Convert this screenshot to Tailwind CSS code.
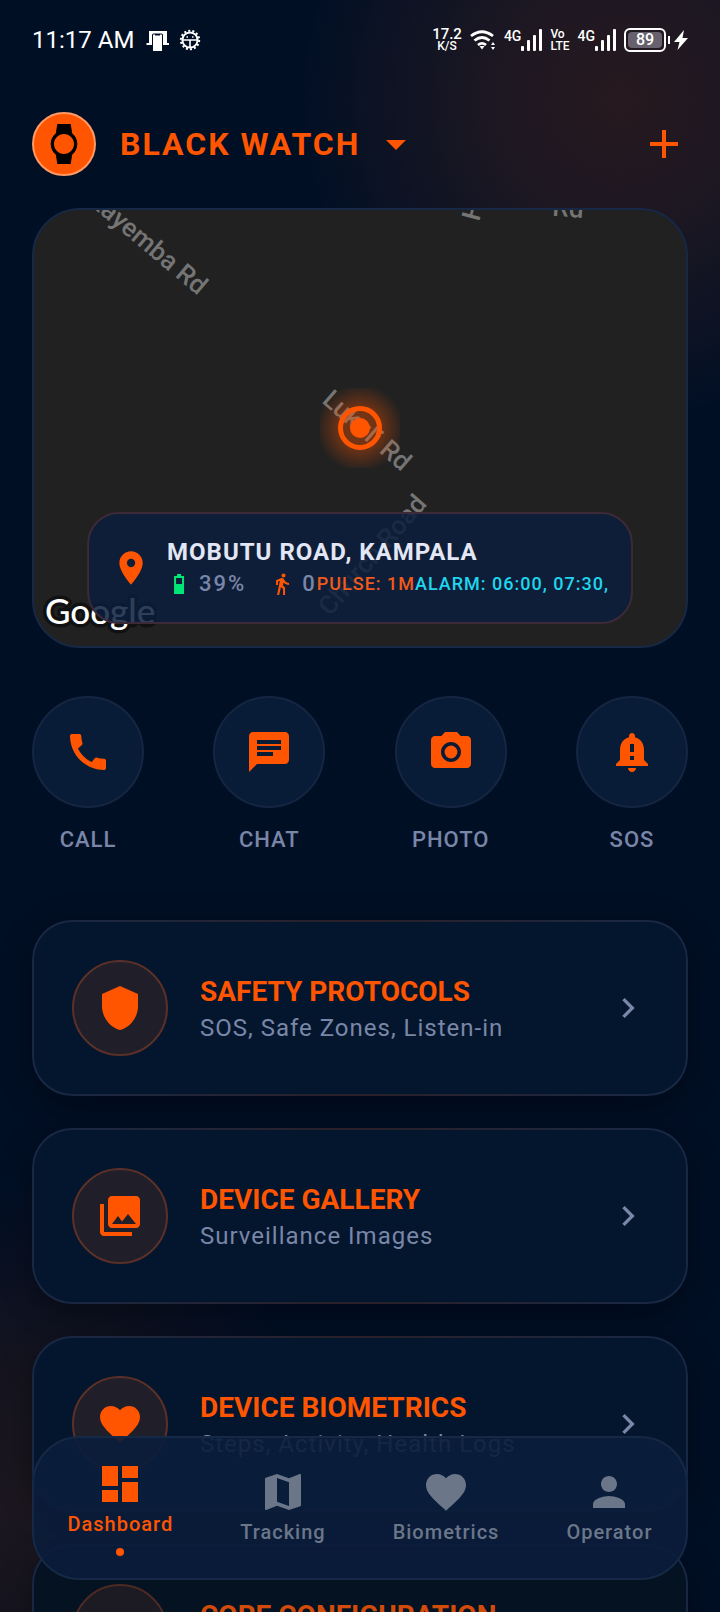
<!DOCTYPE html>
<html lang="en">

<head>
    <meta charset="UTF-8">
    <meta name="viewport" content="width=device-width, initial-scale=1.0">
    <title>Black Watch</title>
    <script src="https://cdn.jsdelivr.net/npm/@tailwindcss/browser@4"></script>
</head>

<body class="bg-[#010f25] font-['Roboto',sans-serif] text-[#7a86a8]">
    <div class="relative h-screen overflow-hidden bg-[radial-gradient(circle_at_620px_100px,#27191f_0px,#1c1722_130px,#0a1224_260px,transparent_320px),radial-gradient(circle_at_20px_1500px,#1c171f_0px,#15141f_130px,#081023_250px,transparent_320px)]">

        <!-- Status bar -->
        <div class="flex h-20 items-center justify-between px-8 text-white">
            <div class="flex items-center gap-3">
                <span class="text-2xl leading-6">11:17 AM</span>
                <div class="flex items-center gap-2">
                    <svg class="size-6" viewBox="0 0 24 24" fill="currentColor" aria-hidden="true">
                        <path d="M3 3h18v12h2v2h-6V7q0-1.500-1.500-1.500h-8Q6 5.500 6 7v10H.5v-2H3z" />
                        <path d="M7 7q0-.5.5-.5h1.500v1h5v-1h1.500q.5 0 .5.5v16H7z" />
                    </svg>
                    <svg class="size-6" viewBox="0 0 24 24" fill="none" stroke="currentColor" aria-hidden="true">
                        <circle cx="12" cy="12" r="7.600" stroke-width="2" />
                        <circle cx="12" cy="12" r="9.200" stroke-width="2" stroke-dasharray="2 2.130" />
                        <path d="M4 12h16M12 12v8" stroke-width="1.600" />
                        <path d="M8.500 9h1.500M14 9h1.500" stroke-width="1.500" />
                    </svg>
                </div>
            </div>
            <div class="flex items-center gap-2 font-medium">
                <div class="text-center">
                    <div class="text-[15px] leading-3">17.2</div>
                    <div class="text-xs leading-3">K/S</div>
                </div>
                <svg class="h-6 w-[26px]" viewBox="0 0 26 24" fill="none" stroke="currentColor" aria-hidden="true">
                    <path d="M1 8q11-8.500 22 0M4.500 12.500q7.500-6 15 0M8 17q4-3.300 8 0" stroke-width="2.800" />
                    <path d="M9.500 18h5L12 21.500z" fill="currentColor" stroke="none" />
                    <path d="M21 17l2-3 2 3zM21 19l2 3 2-3z" fill="currentColor" stroke="none" />
                </svg>
                <div class="flex items-center">
                    <span class="self-start text-sm leading-4">4G</span>
                    <svg class="h-6 w-[21px]" viewBox="0 0 21 24" fill="currentColor" aria-hidden="true">
                        <rect x="0" y="18" width="3" height="5" rx="1" /><rect x="6" y="12" width="3" height="11" rx="1" /><rect x="12" y="7" width="3" height="16" rx="1" /><rect x="18" y="1" width="3" height="22" rx="1" />
                    </svg>
                </div>
                <div class="text-xs leading-3">
                    <div>Vo</div>
                    <div>LTE</div>
                </div>
                <div class="flex items-center">
                    <span class="self-start text-sm leading-4">4G</span>
                    <svg class="h-6 w-[21px]" viewBox="0 0 21 24" fill="currentColor" aria-hidden="true">
                        <rect x="0" y="18" width="3" height="5" rx="1" /><rect x="6" y="12" width="3" height="11" rx="1" /><rect x="12" y="7" width="3" height="16" rx="1" /><rect x="18" y="1" width="3" height="22" rx="1" />
                    </svg>
                </div>
                <div class="flex items-center">
                    <div class="h-6 w-[42px] rounded-md border-2 border-white p-[2px]">
                        <div class="flex h-4 items-center justify-center rounded-sm bg-[#66616c] text-base leading-4">89</div>
                    </div>
                    <div class="ml-[2px] h-2 w-[2px] bg-white"></div>
                    <svg class="ml-1 h-5 w-[14px]" viewBox="0 0 14 20" fill="currentColor" aria-hidden="true">
                        <path d="M10 0L0 12h5.500L3.500 20 14 8H8.500z" />
                    </svg>
                </div>
            </div>
        </div>

        <main class="px-8">
            <!-- Device selector -->
            <header class="flex h-32 items-center">
                <div class="flex size-16 items-center justify-center rounded-full border-2 border-[#ff9a66] bg-[#ff5500]">
                    <svg class="size-12 text-black" viewBox="0 0 24 24" fill="currentColor" aria-hidden="true">
                        <path d="M20 12c0-2.540-1.190-4.810-3.040-6.270L16 0H8l-.95 5.730C5.190 7.190 4 9.450 4 12s1.190 4.810 3.050 6.270L8 24h8l.96-5.730C18.810 16.810 20 14.540 20 12zM6 12c0-3.310 2.690-6 6-6s6 2.690 6 6-2.690 6-6 6-6-2.690-6-6z" transform="translate(2 2) scale(.8333)" />
                    </svg>
                </div>
                <button class="ml-6 flex items-center gap-3 text-[#ff5500]">
                    <span class="text-[32px] font-bold leading-10 tracking-[2px]">BLACK WATCH</span>
                    <svg class="size-12" viewBox="0 0 24 24" fill="currentColor" aria-hidden="true"><path d="M7 10l5 5 5-5z" /></svg>
                </button>
                <button class="ml-auto text-[#ff5500]" aria-label="Add device">
                    <svg class="size-12" viewBox="0 0 24 24" fill="currentColor" aria-hidden="true"><path d="M19 13h-6v6h-2v-6H5v-2h6V5h2v6h6v2z" /></svg>
                </button>
            </header>

            <!-- Map -->
            <section class="relative h-[440px] overflow-hidden rounded-[48px] border-2 border-[#172846] bg-[#212121]">
                <svg class="absolute left-1/2 top-0 h-[436px] w-[652px] -translate-x-1/2" viewBox="0 0 652 436" aria-hidden="true">
                    <g fill="#757575" font-size="26" font-weight="500">
                        <text transform="translate(164 86) rotate(40)" text-anchor="end">Kayemba Rd</text>
                        <text transform="translate(287 192) rotate(41)">Lukuli Rd</text>
                        <text transform="translate(445 12) rotate(-75)">Hill Rd</text>
                        <text transform="translate(549 8) rotate(4)" text-anchor="end">Rd</text>
                        <text transform="translate(296 407) rotate(-49)">Church Road</text>
                    </g>
                    <text x="11" y="414" font-family="Lato" font-size="35" font-weight="500" fill="#fff" stroke="#111" stroke-width="7" stroke-linejoin="round" paint-order="stroke">Google</text>
                </svg>
                <div class="absolute left-1/2 top-1/2 flex size-20 -translate-x-1/2 -translate-y-1/2 items-center justify-center bg-[radial-gradient(circle,#ff550066_0px,#ff550059_20px,transparent_44px)]">
                    <div class="flex size-11 items-center justify-center rounded-full border-[5px] border-[#ff5500]">
                        <div class="size-5 rounded-full bg-[#ff5500]"></div>
                    </div>
                </div>

                <!-- Location card -->
                <div class="absolute bottom-[22px] left-1/2 flex h-28 -translate-x-1/2 items-center gap-4 whitespace-nowrap rounded-[32px] border-2 border-[#3c2a36] bg-[#0b1d3c]/85 px-[22px]">
                    <svg class="size-10 text-[#ff5500]" viewBox="0 0 24 24" fill="currentColor" aria-hidden="true"><path d="M12 2C8.130 2 5 5.130 5 9c0 5.250 7 13 7 13s7-7.750 7-13c0-3.870-3.130-7-7-7zm0 9.500c-1.380 0-2.500-1.120-2.500-2.500s1.120-2.500 2.500-2.500 2.500 1.120 2.500 2.500-1.120 2.500-2.500 2.500z" /></svg>
                    <div>
                        <div class="text-2xl font-bold leading-8 tracking-[1px] text-[#e2e6f5]">MOBUTU ROAD, KAMPALA</div>
                        <div class="flex items-center text-lg font-medium leading-8 tracking-[1px]">
                            <svg class="size-6 text-[#00e676]" viewBox="0 0 24 24" fill="currentColor" aria-hidden="true"><path d="M17 4h-3V2h-4v2H7v18h10zm-2 8H9V6h6z" /></svg>
                            <span class="ml-2 text-[22px] tracking-[2px]">39%</span>
                            <svg class="ml-6 size-6 text-[#ff5500]" viewBox="0 0 24 24" fill="currentColor" aria-hidden="true"><path d="M13.500 5.500c1.100 0 2-.9 2-2s-.9-2-2-2-2 .9-2 2 .9 2 2 2zM9.800 8.900L7 23h2.100l1.800-8 2.100 2v6h2v-7.500l-2.100-2 .6-3C14.800 12 16.800 13 19 13v-2c-1.900 0-3.500-1-4.300-2.400l-1-1.600c-.4-.6-1-1-1.700-1-.3 0-.5.1-.8.1L6 8.300V13h2V9.600l1.800-.7" /></svg>
                            <span class="ml-2 text-[22px] tracking-[2px]">0</span>
                            <span class="text-[#f05a1a]">PULSE: 1M</span>
                            <span class="text-[#1fd6ee]">ALARM: 06:00, 07:30,</span>
                        </div>
                    </div>
                </div>
            </section>

            <!-- Quick actions -->
            <div class="mt-12 flex justify-between text-[22px] font-medium leading-8 tracking-[1px]">
                <button class="flex w-28 flex-col items-center gap-4">
                    <span class="flex size-28 items-center justify-center rounded-full border-2 border-[#152643] bg-[#081b37] text-[#ff5500]">
                        <svg class="size-12" viewBox="0 0 24 24" fill="currentColor" aria-hidden="true"><path d="M20.010 15.380c-1.230 0-2.420-.2-3.530-.56-.35-.12-.74-.03-1.010.24l-1.570 1.970c-2.830-1.350-5.480-3.900-6.890-6.830l1.950-1.660c.27-.28.35-.67.24-1.020-.37-1.110-.56-2.300-.56-3.530 0-.54-.45-.99-.99-.99H4.190C3.650 3 3 3.240 3 3.990 3 13.280 10.730 21 20.010 21c.71 0 .99-.63.99-1.180v-3.450c0-.54-.45-.99-.99-.99z" /></svg>
                    </span>
                    CALL
                </button>
                <button class="flex w-28 flex-col items-center gap-4">
                    <span class="flex size-28 items-center justify-center rounded-full border-2 border-[#152643] bg-[#081b37] text-[#ff5500]">
                        <svg class="size-12" viewBox="0 0 24 24" fill="currentColor" aria-hidden="true"><path d="M20 2H4c-1.100 0-1.990.9-1.990 2L2 22l4-4h14c1.100 0 2-.9 2-2V4c0-1.100-.9-2-2-2zM6 9h12v2H6V9zm8 5H6v-2h8v2zm4-6H6V6h12v2z" /></svg>
                    </span>
                    CHAT
                </button>
                <button class="flex w-28 flex-col items-center gap-4">
                    <span class="flex size-28 items-center justify-center rounded-full border-2 border-[#152643] bg-[#081b37] text-[#ff5500]">
                        <svg class="size-12" viewBox="0 0 24 24" fill="currentColor" aria-hidden="true"><circle cx="12" cy="12" r="3.200" /><path d="M9 2L7.170 4H4c-1.100 0-2 .9-2 2v12c0 1.100.9 2 2 2h16c1.100 0 2-.9 2-2V6c0-1.100-.9-2-2-2h-3.170L15 2H9zm3 15c-2.760 0-5-2.240-5-5s2.240-5 5-5 5 2.240 5 5-2.240 5-5 5z" /></svg>
                    </span>
                    PHOTO
                </button>
                <button class="flex w-28 flex-col items-center gap-4">
                    <span class="flex size-28 items-center justify-center rounded-full border-2 border-[#152643] bg-[#081b37] text-[#ff5500]">
                        <svg class="size-12" viewBox="0 0 24 24" fill="currentColor" aria-hidden="true"><path d="M18 16v-5c0-3.070-1.640-5.640-4.500-6.320V4c0-.83-.67-1.500-1.500-1.500S10.500 3.170 10.500 4v.68C7.630 5.360 6 7.920 6 11v5l-2 2v1h16v-1l-2-2zm-5 0h-2v-2h2v2zm0-4h-2V8h2v4zm-1 10c1.100 0 2-.9 2-2h-4c0 1.100.89 2 2 2z" /></svg>
                    </span>
                    SOS
                </button>
            </div>

            <!-- Menu cards -->
            <div class="mt-16 flex flex-col gap-8">
                <a href="#safety" class="block rounded-[40px] bg-linear-to-r from-[#172744] via-[#2a2029] to-[#172744] p-[2px] shadow-[0_8px_32px_#00000066]">
                    <div class="flex items-center rounded-[38px] bg-[#04162d] p-[38px]">
                        <span class="flex size-24 items-center justify-center rounded-full border-2 border-[#5b3028] bg-[#201e29] text-[#ff5500]">
                            <svg class="size-12" viewBox="0 0 24 24" fill="currentColor" aria-hidden="true"><path d="M12 1L3 5v6c0 5.550 3.840 10.740 9 12 5.160-1.260 9-6.450 9-12V5l-9-4z" /></svg>
                        </span>
                        <span class="ml-8 flex-1 pt-1">
                            <span class="block text-[28px] font-bold leading-9 text-[#ff5500]">SAFETY PROTOCOLS</span>
                            <span class="block text-2xl leading-9 tracking-[1px]">SOS, Safe Zones, Listen-in</span>
                        </span>
                        <svg class="size-10" viewBox="0 0 24 24" fill="currentColor" aria-hidden="true"><path d="M10 6L8.590 7.410 13.170 12l-4.580 4.590L10 18l6-6z" /></svg>
                    </div>
                </a>
                <a href="#gallery" class="block rounded-[40px] bg-linear-to-r from-[#172744] via-[#2a2029] to-[#172744] p-[2px] shadow-[0_8px_32px_#00000066]">
                    <div class="flex items-center rounded-[38px] bg-[#04162d] p-[38px]">
                        <span class="flex size-24 items-center justify-center rounded-full border-2 border-[#5b3028] bg-[#201e29] text-[#ff5500]">
                            <svg class="size-12" viewBox="0 0 24 24" fill="currentColor" aria-hidden="true"><path d="M22 16V4c0-1.100-.9-2-2-2H8c-1.100 0-2 .9-2 2v12c0 1.100.9 2 2 2h12c1.100 0 2-.9 2-2zm-11-4l2.030 2.710L16 11l4 5H8l3-4zM2 6v14c0 1.100.9 2 2 2h14v-2H4V6H2z" /></svg>
                        </span>
                        <span class="ml-8 flex-1 pt-1">
                            <span class="block text-[28px] font-bold leading-9 text-[#ff5500]">DEVICE GALLERY</span>
                            <span class="block text-2xl leading-9 tracking-[1px]">Surveillance Images</span>
                        </span>
                        <svg class="size-10" viewBox="0 0 24 24" fill="currentColor" aria-hidden="true"><path d="M10 6L8.590 7.410 13.170 12l-4.580 4.590L10 18l6-6z" /></svg>
                    </div>
                </a>
                <a href="#biometrics" class="block rounded-[40px] bg-linear-to-r from-[#172744] via-[#2a2029] to-[#172744] p-[2px] shadow-[0_8px_32px_#00000066]">
                    <div class="flex items-center rounded-[38px] bg-[#04162d] p-[38px]">
                        <span class="flex size-24 items-center justify-center rounded-full border-2 border-[#5b3028] bg-[#201e29] text-[#ff5500]">
                            <svg class="size-12" viewBox="0 0 24 24" fill="currentColor" aria-hidden="true"><path d="M12 21.350l-1.450-1.320C5.400 15.360 2 12.280 2 8.500 2 5.420 4.420 3 7.500 3c1.740 0 3.410.81 4.500 2.090C13.090 3.810 14.760 3 16.500 3 19.580 3 22 5.420 22 8.500c0 3.780-3.400 6.860-8.550 11.540L12 21.350z" /></svg>
                        </span>
                        <span class="ml-8 flex-1 pt-1">
                            <span class="block text-[28px] font-bold leading-9 text-[#ff5500]">DEVICE BIOMETRICS</span>
                            <span class="block text-2xl leading-9 tracking-[1px]">Steps, Activity, Health Logs</span>
                        </span>
                        <svg class="size-10" viewBox="0 0 24 24" fill="currentColor" aria-hidden="true"><path d="M10 6L8.590 7.410 13.170 12l-4.580 4.590L10 18l6-6z" /></svg>
                    </div>
                </a>
                <a href="#configuration" class="block rounded-[40px] bg-linear-to-r from-[#172744] via-[#2a2029] to-[#172744] p-[2px] shadow-[0_8px_32px_#00000066]">
                    <div class="flex items-center rounded-[38px] bg-[#041222] p-[38px]">
                        <span class="flex size-24 items-center justify-center rounded-full border-2 border-[#4d2b25] bg-[#1c1b24]"></span>
                        <span class="ml-8 flex-1 pt-1">
                            <span class="block text-[28px] font-bold leading-9 text-[#d24b0a]">CORE CONFIGURATION</span>
                            <span class="block text-2xl leading-9">&nbsp;</span>
                        </span>
                    </div>
                </a>
            </div>
        </main>

        <!-- Bottom navigation -->
        <nav class="absolute inset-x-8 bottom-8 flex h-36 items-center justify-around rounded-[48px] border-2 border-[#152947] bg-[#0a1d3b]/90 text-xl font-medium leading-6 tracking-[1px] text-[#6b7689]">
            <a href="#dashboard" class="flex flex-col items-center text-[#ff5500]">
                <svg class="size-12" viewBox="0 0 24 24" fill="currentColor" aria-hidden="true"><path d="M3 13h8V3H3v10zm0 8h8v-6H3v6zm10 0h8V11h-8v10zm0-18v6h8V3h-8z" /></svg>
                <span class="mt-1">Dashboard</span>
                <span class="mt-3 size-2 rounded-full bg-[#ff5500]"></span>
            </a>
            <a href="#tracking" class="flex flex-col items-center pb-1">
                <svg class="size-12" viewBox="0 0 24 24" fill="currentColor" aria-hidden="true"><path d="M20.500 3l-.16.030L15 5.100 9 3 3.360 4.900c-.21.070-.36.250-.36.480V20.500c0 .28.220.5.500.5l.16-.030L9 18.900l6 2.100 5.640-1.900c.21-.070.36-.250.36-.480V3.500c0-.280-.220-.5-.5-.5zM15 19l-6-2.110V5l6 2.110V19z" /></svg>
                <span class="mt-1">Tracking</span>
            </a>
            <a href="#health" class="flex flex-col items-center pb-1">
                <svg class="size-12" viewBox="0 0 24 24" fill="currentColor" aria-hidden="true"><path d="M12 21.350l-1.450-1.320C5.400 15.360 2 12.280 2 8.500 2 5.420 4.420 3 7.500 3c1.740 0 3.410.81 4.500 2.090C13.090 3.810 14.760 3 16.500 3 19.580 3 22 5.420 22 8.500c0 3.780-3.400 6.860-8.550 11.540L12 21.350z" /></svg>
                <span class="mt-1">Biometrics</span>
            </a>
            <a href="#operator" class="flex flex-col items-center pb-1">
                <svg class="size-12" viewBox="0 0 24 24" fill="currentColor" aria-hidden="true"><path d="M12 12c2.210 0 4-1.790 4-4s-1.790-4-4-4-4 1.790-4 4 1.790 4 4 4zm0 2c-2.670 0-8 1.340-8 4v2h16v-2c0-2.660-5.330-4-8-4z" /></svg>
                <span class="mt-1">Operator</span>
            </a>
        </nav>
    </div>
</body>

</html>
